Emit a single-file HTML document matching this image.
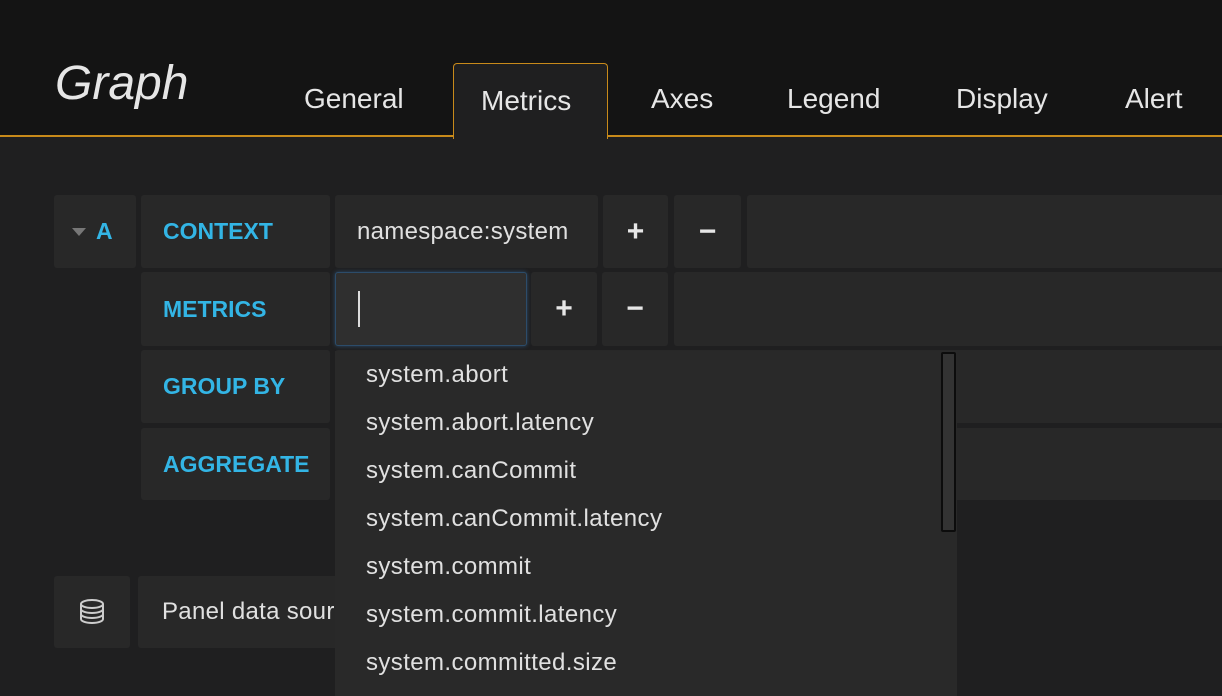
<!DOCTYPE html>
<html><head><meta charset="utf-8"><style>
*{margin:0;padding:0;box-sizing:border-box}
body{width:1222px;height:696px;overflow:hidden;background:#1f1f20;font-family:"Liberation Sans",sans-serif;position:relative;color:#e0e0e0}
.hdr{position:absolute;left:0;top:0;width:1222px;height:137px;background:#141414;border-bottom:2px solid #c88a1a}
.title{position:absolute;left:55px;top:56px;font-size:48px;font-style:italic;color:#e6e6e6}
.tab{position:absolute;top:83px;font-size:28px;color:#e6e6e6}
.atab{position:absolute;left:453px;top:63px;width:155px;height:76px;background:#1f1f20;border:1px solid #c88a1a;border-bottom:none;border-radius:4px 4px 0 0}
.c{position:absolute;background:#282828;border-radius:3px}
.lbl{color:#33b5e5;font-weight:bold;font-size:23px;padding-left:22px;display:flex;align-items:center}
.btn{display:flex;align-items:center;justify-content:center;font-size:30px;font-weight:bold;color:#e6e6e6}
.dd{position:absolute;left:335px;top:351px;width:622px;height:345px;background:#292929}
.it{position:absolute;left:31px;font-size:24px;letter-spacing:0.4px;color:#e0e0e0}
.sb{position:absolute;left:606px;top:1px;width:15px;height:180px;border:2px solid #0c0c0c;background:#333;border-radius:2px}
</style></head><body>
<div class="hdr"></div>
<div class="title">Graph</div>
<div class="atab"></div>
<div class="tab" style="left:304px">General</div>
<div class="tab" style="left:481px;top:85px">Metrics</div>
<div class="tab" style="left:651px">Axes</div>
<div class="tab" style="left:787px">Legend</div>
<div class="tab" style="left:956px">Display</div>
<div class="tab" style="left:1125px">Alert</div>

<div class="c lbl" style="left:54px;top:195px;width:82px;height:73px;padding-left:18px"><span style="display:inline-block;width:0;height:0;border-left:7px solid transparent;border-right:7px solid transparent;border-top:8px solid #777;margin-right:10px"></span>A</div>
<div class="c lbl" style="left:141px;top:195px;width:189px;height:73px">CONTEXT</div>
<div class="c" style="left:335px;top:195px;width:263px;height:73px;font-size:24px;letter-spacing:0.3px;display:flex;align-items:center;padding-left:22px">namespace:system</div>
<div class="c btn" style="left:603px;top:195px;width:65px;height:73px">+</div>
<div class="c btn" style="left:674px;top:195px;width:67px;height:73px">−</div>
<div class="c" style="left:747px;top:195px;width:480px;height:73px"></div>

<div class="c lbl" style="left:141px;top:272px;width:189px;height:74px">METRICS</div>
<div class="c" style="left:335px;top:272px;width:192px;height:74px;background:#2f2f2f;border:1px solid #2c4c6a;box-shadow:0 0 4px rgba(60,120,180,.5)"><div style="position:absolute;left:22px;top:18px;width:2px;height:36px;background:#ddd"></div></div>
<div class="c btn" style="left:531px;top:272px;width:66px;height:74px">+</div>
<div class="c btn" style="left:602px;top:272px;width:66px;height:74px">−</div>
<div class="c" style="left:674px;top:272px;width:550px;height:74px"></div>

<div class="c lbl" style="left:141px;top:350px;width:189px;height:73px">GROUP BY</div>
<div class="c" style="left:335px;top:350px;width:890px;height:73px"></div>
<div class="c lbl" style="left:141px;top:428px;width:189px;height:72px">AGGREGATE</div>
<div class="c" style="left:335px;top:428px;width:890px;height:72px"></div>

<div class="c" style="left:54px;top:576px;width:76px;height:72px;display:flex;align-items:center;justify-content:center">
<svg width="26" height="26" viewBox="0 0 26 26" fill="none" stroke="#ccc" stroke-width="2"><ellipse cx="13" cy="5" rx="11" ry="4"/><path d="M2 5v15c0 2.2 4.9 4 11 4s11-1.8 11-4V5M2 10c0 2.2 4.9 4 11 4s11-1.8 11-4M2 15c0 2.2 4.9 4 11 4s11-1.8 11-4"/></svg></div>
<div class="c" style="left:138px;top:576px;width:300px;height:72px;font-size:24px;letter-spacing:0.3px;display:flex;align-items:center;padding-left:24px">Panel data source</div>

<div class="dd">
<div class="it" style="top:10px">system.abort</div>
<div class="it" style="top:58px">system.abort.latency</div>
<div class="it" style="top:106px">system.canCommit</div>
<div class="it" style="top:154px">system.canCommit.latency</div>
<div class="it" style="top:202px">system.commit</div>
<div class="it" style="top:250px">system.commit.latency</div>
<div class="it" style="top:298px">system.committed.size</div>
<div class="sb"></div>
</div>
</body></html>
